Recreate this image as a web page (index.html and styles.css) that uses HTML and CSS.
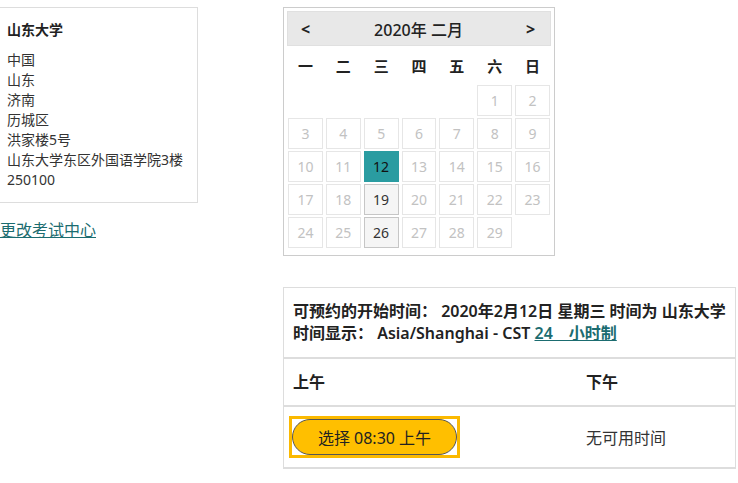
FILE: index.html
```html
<!DOCTYPE html>
<html lang="zh-CN">
<head>
<meta charset="utf-8">
<title>选择时间</title>
<link rel="stylesheet" href="styles.css">
</head>
<body>
<div class="page">
  <aside class="side">
    <div class="address">
      <div class="name">山东大学</div>
      <div>中国</div>
      <div>山东</div>
      <div>济南</div>
      <div>历城区</div>
      <div>洪家楼5号</div>
      <div>山东大学东区外国语学院3楼</div>
      <div>250100</div>
    </div>
    <a class="change" href="#">更改考试中心</a>
  </aside>
  <main class="main">
    <div class="cal">
      <div class="cal-head">
        <span class="nav">&lt;</span>
        <span class="title">2020年 二月</span>
        <span class="nav">&gt;</span>
      </div>
      <div class="weekdays">
        <span>一</span><span>二</span><span>三</span><span>四</span><span>五</span><span>六</span><span>日</span>
      </div>
      <div class="days">
        <span class="empty"></span><span class="empty"></span><span class="empty"></span><span class="empty"></span><span class="empty"></span>
        <span class="day">1</span><span class="day">2</span>
        <span class="day">3</span><span class="day">4</span><span class="day">5</span><span class="day">6</span><span class="day">7</span><span class="day">8</span><span class="day">9</span>
        <span class="day">10</span><span class="day">11</span><span class="day sel">12</span><span class="day">13</span><span class="day">14</span><span class="day">15</span><span class="day">16</span>
        <span class="day">17</span><span class="day">18</span><span class="day avail">19</span><span class="day">20</span><span class="day">21</span><span class="day">22</span><span class="day">23</span>
        <span class="day">24</span><span class="day">25</span><span class="day avail">26</span><span class="day">27</span><span class="day">28</span><span class="day">29</span>
      </div>
    </div>
    <div class="slots">
      <div class="slots-head">
        <div class="line">可预约的开始时间： 2020年2月12日 星期三 时间为 山东大学</div>
        <div class="line">时间显示： Asia/Shanghai - CST <a class="fmt" href="#">24&emsp;小时制</a></div>
      </div>
      <div class="row row-head">
        <div class="cell">上午</div>
        <div class="cell">下午</div>
      </div>
      <div class="row row-body">
        <div class="cell"><span class="focus"><button class="btn" type="button">选择 08:30 上午</button></span></div>
        <div class="cell none">无可用时间</div>
      </div>
    </div>
  </main>
</div>
</body>
</html>
```
FILE: styles.css
```css
body {
  margin: 0;
  font-family: "Noto Sans", "Noto Sans CJK SC", sans-serif;
  color: #333;
  background: #fff;
}

.page {
  display: flex;
  align-items: flex-start;
  padding-top: 7px;
}

.side {
  flex: none;
  width: 200px;
  margin-left: -2px;
}

.address {
  border: 1px solid #ddd;
  padding: 12px 8px;
  font-size: 14px;
  line-height: 20px;
  color: #333;
}

.name {
  font-weight: 700;
  margin-bottom: 10px;
  color: #222;
}

.change {
  display: block;
  margin-top: 17px;
  margin-left: 2px;
  font-size: 16px;
  line-height: 20px;
  color: #1b6c70;
  text-decoration: underline;
}

.main {
  flex: none;
  width: 453px;
  margin-left: 85px;
}

.cal {
  box-sizing: border-box;
  width: 272px;
  border: 1px solid #ccc;
  padding: 3px 3px 7px;
}

.cal-head {
  height: 35px;
  box-sizing: border-box;
  background: #e8e8e8;
  border: 1px solid #e0e0e0;
  display: flex;
  align-items: center;
  padding: 0 14px 0 13px;
  color: #222;
}

.nav {
  font-size: 16px;
  font-weight: 700;
  width: 10px;
}

.title {
  flex: 1;
  text-align: center;
  font-size: 16px;
  font-weight: 500;
}

.weekdays {
  display: grid;
  grid-template-columns: repeat(7, 1fr);
  column-gap: 3px;
  margin: 0 1px;
  height: 39px;
  align-items: center;
  text-align: center;
  font-size: 15px;
  font-weight: 700;
  color: #222;
}

.days {
  display: grid;
  grid-template-columns: repeat(7, 1fr);
  grid-auto-rows: 31px;
  column-gap: 3px;
  row-gap: 2px;
  margin: 0 1px;
}

.day {
  box-sizing: border-box;
  border: 1px solid #e6e6e6;
  display: flex;
  align-items: center;
  justify-content: center;
  font-size: 14px;
  color: #c2c2c2;
}

.day.sel {
  background: #2a9ca1;
  border-color: #2a9ca1;
  color: #111;
}

.day.avail {
  background: #f5f5f5;
  border-color: #c6c6c6;
  color: #333;
}

.slots {
  margin-top: 31px;
  border: 1px solid #ddd;
  border-bottom-width: 2px;
}

.slots-head {
  padding: 12px 9px 13px;
  font-size: 16px;
  line-height: 22px;
  font-weight: 600;
  color: #222;
}

.line {
  white-space: nowrap;
}

.fmt {
  color: #1b6c70;
  text-decoration: underline;
}

.row {
  display: grid;
  grid-template-columns: 293px 1fr;
  border-top: 2px solid #ddd;
}

.row-head .cell {
  padding: 12px 9px;
  font-size: 16px;
  line-height: 22px;
  font-weight: 700;
  color: #222;
}

.row-body .cell {
  padding: 9px 5px;
  display: flex;
  align-items: center;
}

.row-body .none {
  padding-left: 9px;
  font-size: 16px;
  color: #333;
}

.focus {
  display: flex;
  border: 3px solid #fbb900;
  background: #fff;
}

.btn {
  box-sizing: border-box;
  width: 165px;
  height: 36px;
  border: 1px solid #555;
  border-radius: 18px;
  background: #ffbf00;
  font-family: inherit;
  font-size: 16px;
  color: #222;
  padding: 0;
  cursor: pointer;
}
```
